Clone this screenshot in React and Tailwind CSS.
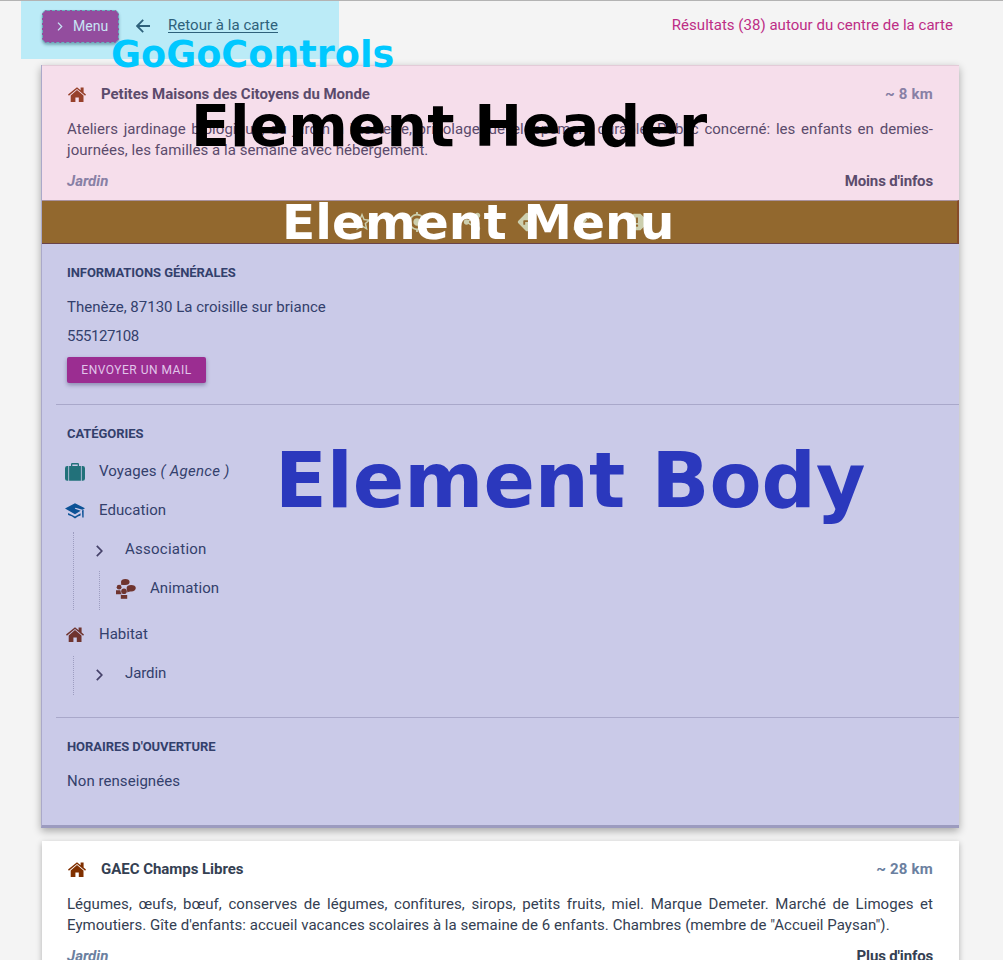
import React from "react";
import { MdStarBorder, MdMyLocation, MdShare, MdDirections, MdEdit, MdReport } from "react-icons/md";

function House({ className }) {
  return (
    <svg viewBox="0 0 18 15" className={`h-[15px] w-[18px] shrink-0 ${className}`} fill="currentColor">
      <path d="M9 0.3 12.6 3.2V0.6H15.6V5.4L18 7.6 17.1 8.7 9 2.1 0.9 8.7 0 7.6Z" />
      <path d="M9 3.1 15.5 8.4V15H10.8V10.4H7.4V15H2.7V8.4Z" />
    </svg>
  );
}

function Suitcase() {
  return (
    <svg viewBox="0 0 20 18" className="h-[18px] w-5" fill="#22717a">
      <path d="M3.3 3V17.8H2.2Q0 17.8 0 15.6V5.2Q0 3 2.2 3ZM16.7 3V17.8H17.8Q20 17.8 20 15.6V5.2Q20 3 17.8 3Z" />
      <path fillRule="evenodd" d="M4.1 17.8V3H6V1.2Q6 0 7.2 0H12.8Q14 0 14 1.2V3H15.9V17.8ZM7.3 3H12.7V1.4H7.3Z" />
    </svg>
  );
}

function Graduation() {
  return (
    <svg viewBox="0 0 20 16" className="h-4 w-5" fill="#0c5296">
      <path d="M10 0.2 20 5.3 17.5 6.7 10.6 4.8 9.8 5.7 15.7 7.7 10 11.2 0 5.6Z" />
      <path d="M3.1 10 10 13.6 15.6 10.3V12.4Q13 12.6 10 15.6 7 12.6 3.1 12.1Z" />
      <path d="M17 7.5 18.6 6.7V14.4H17.3Z" />
    </svg>
  );
}

function Crowd() {
  return (
    <svg viewBox="0 0 20 20" className="h-5 w-5" fill="#6f342f">
      <path d="M9.3 0.1C12 0.1 13.6 1.3 13.6 3S12 6 9.3 6 5.7 5.5 4.6 5.7C5.6 5 5 4 5 3 5 1.3 6.8 0.1 9.3 0.1Z" />
      <path d="M15.2 6C18 6 19.8 7.3 19.8 9.1S18 12.6 15.2 12.6C13.7 12.6 12.7 12.8 11.2 13.5 11.7 12.4 10.6 10.8 10.6 9.1 10.6 7.3 12.4 6 15.2 6Z" />
      <circle cx="3.1" cy="8.2" r="2.4" />
      <circle cx="8" cy="12.3" r="2.8" />
      <path d="M0 11.2H4.4Q4.5 14 6 15.2H0Z" />
      <path d="M4.8 16H11.2V19.8H4.8Z" />
    </svg>
  );
}

function Chevron({ className }) {
  return (
    <svg viewBox="0 0 7 12" className={className} fill="none" stroke="currentColor" strokeWidth="1.7">
      <path d="M0.8 0.8 5.8 6 0.8 11.2" />
    </svg>
  );
}

function ItemHeader({ title, distance, text, action, tone, muted, icon }) {
  return (
    <div className={`h-[134px] pr-[26px] pl-[25px] pt-[17px] text-[15px] ${tone}`}>
      <div className="flex h-[22px] items-center font-bold">
        <House className={`ml-px ${icon}`} />
        <span className="ml-[15px] flex-1 tracking-[-0.03px]">{title}</span>
        <span className={`tracking-[0.2px] ${muted}`}>{distance}</span>
      </div>
      <p className="mt-[14px] text-justify leading-[21px] tracking-[0.045px]">{text}</p>
      <div className="mt-[10px] flex h-[21px] items-center justify-between font-bold">
        <span className={`italic ${muted}`}>Jardin</span>
        <span className="tracking-[-0.15px]">{action}</span>
      </div>
    </div>
  );
}

function Heading({ children }) {
  return <h3 className="text-[13px] leading-5 font-bold tracking-[-0.07px] text-[#33406c]">{children}</h3>;
}

export default function App() {
  return (
    <div className="relative h-[960px] w-[1003px] overflow-hidden border-t border-[#b3b3b3] bg-[#f4f4f4] font-['Roboto',sans-serif] text-[15px]">
      <header className="flex h-[64px] items-start justify-between pr-[50px] pl-[21px]">
        <div className="flex h-[58px] w-[318px] items-start bg-[#bbebf7] pt-[9px] pl-[21px]">
          <button className="flex h-[33px] w-[77px] items-center rounded-[5px] border border-dashed border-[#67b0bd] bg-[#934d9e] pl-[14px] text-[14px] text-[#c8e5f5] shadow-[0_2px_3px_rgba(40,90,110,0.45)]">
            <Chevron className="h-[9px] w-[6px]" />
            <span className="ml-[10px]">Menu</span>
          </button>
          <svg viewBox="0 0 14 14" className="mt-[9px] ml-[17px] h-[14px] w-[14px]" fill="none" stroke="#2e617b" strokeWidth="1.8">
            <path d="M14 7H1.2M7.2 0.9 1.1 7 7.2 13.1" />
          </svg>
          <a className="mt-[4px] ml-[18px] leading-[23px] tracking-[0.04px] text-[#2e617b] underline underline-offset-2">Retour à la carte</a>
        </div>
        <span className="mt-[13px] leading-[23px] tracking-[0.025px] text-[#bd2d86]">Résultats (38) autour du centre de la carte</span>
      </header>

      <main className="ml-[41px] w-[918px]">
        <article className="h-[763px] border-b-3 border-l border-b-[#9c9bbf] border-l-[#aaa9c9] shadow-[0_3px_8px_rgba(0,0,0,0.32)]">
          <div className="border-t border-[#e3cbd8]">
            <ItemHeader
              title="Petites Maisons des Citoyens du Monde"
              distance="~ 8 km"
              text="Ateliers jardinage biologique, du jardin à l'assiette, bricolage, developpement durable. Public concerné: les enfants en demies-journées, les familles à la semaine avec hébergement."
              action="Moins d'infos"
              tone="bg-[#f6deeb] text-[#5b4b6c]"
              muted="text-[#8880a5]"
              icon="text-[#97412b]"
            />
          </div>
          <nav className="flex h-[44px] items-center justify-center gap-[33px] border-t border-r-2 border-b border-t-[#a9929f] border-r-[#874b28] border-b-[#69434a] bg-[#92682e] pr-[1px] text-[22px] text-[#cccfae]">
            <MdStarBorder />
            <MdMyLocation />
            <MdShare />
            <MdDirections />
            <MdEdit />
            <MdReport />
          </nav>
          <div className="h-[581px] bg-[#cacae8] text-[#33406c]">
            <section className="h-[160px] pt-[19px] pl-[25px]">
              <Heading>INFORMATIONS GÉNÉRALES</Heading>
              <p className="mt-[12px] leading-6">Thenèze, 87130 La croisille sur briance</p>
              <p className="mt-[5px] leading-6 tracking-[-0.45px]">555127108</p>
              <button className="mt-[9px] block h-[26px] w-[139px] rounded-[2px] bg-[#9b2d91] text-[12px] tracking-[0.5px] text-[#e0c5ea] shadow-[0_2px_4px_rgba(40,40,90,0.4)]">
                ENVOYER UN MAIL
              </button>
            </section>
            <section className="ml-[14px] h-[313px] border-t border-[#a9a8ca] pt-[19px] pl-[9px]">
              <div className="pl-[2px]"><Heading>CATÉGORIES</Heading></div>
              <div className="mt-[8px] flex h-[39px] items-center">
                <Suitcase />
                <span className="ml-[14px] tracking-[0.1px]">Voyages <i className="tracking-[0.3px]">( Agence )</i></span>
              </div>
              <div className="flex h-[39px] items-center">
                <Graduation />
                <span className="ml-[14px] tracking-[0.08px]">Education</span>
              </div>
              <div className="mt-[2px] ml-[8px] h-[78px] border-l border-dotted border-[#9d9dc0]">
                <div className="flex h-[39px] items-center pb-[4px] pl-[22px]">
                  <Chevron className="mt-[3px] h-3 w-[7px] text-[#46426a]" />
                  <span className="ml-[22px] tracking-[0.25px]">Association</span>
                </div>
                <div className="ml-[25px] flex h-[39px] items-center border-l border-dotted border-[#9d9dc0] pb-[4px] pl-[16px]">
                  <Crowd />
                  <span className="ml-[14px] tracking-[0.08px]">Animation</span>
                </div>
              </div>
              <div className="mt-[5px] flex h-[39px] items-center">
                <House className="ml-px text-[#6f342f]" />
                <span className="ml-[15px]">Habitat</span>
              </div>
              <div className="mt-[2px] ml-[8px] h-[39px] border-l border-dotted border-[#9d9dc0]">
                <div className="flex h-[39px] items-center pb-[4px] pl-[22px]">
                  <Chevron className="mt-[3px] h-3 w-[7px] text-[#46426a]" />
                  <span className="ml-[22px] tracking-[-0.1px]">Jardin</span>
                </div>
              </div>
            </section>
            <section className="ml-[14px] border-t border-[#a9a8ca] pt-[19px] pl-[11px]">
              <Heading>HORAIRES D'OUVERTURE</Heading>
              <p className="mt-[12px] leading-6 tracking-[0.06px]">Non renseignées</p>
            </section>
          </div>
        </article>

        <article className="mt-[13px] ml-px h-[134px] bg-white shadow-[0_2px_6px_rgba(0,0,0,0.28)]">
          <ItemHeader
            title="GAEC Champs Libres"
            distance="~ 28 km"
            text={`Légumes, œufs, bœuf, conserves de légumes, confitures, sirops, petits fruits, miel. Marque Demeter. Marché de Limoges et Eymoutiers. Gîte d'enfants: accueil vacances scolaires à la semaine de 6 enfants. Chambres (membre de "Accueil Paysan").`}
            action="Plus d'infos"
            tone="bg-white text-[#344052]"
            muted="text-[#6b809f]"
            icon="text-[#803000]"
          />
        </article>
      </main>

      <div className="pointer-events-none font-['DejaVu_Sans',sans-serif] leading-none font-bold whitespace-nowrap">
        <span className="absolute top-[36px] left-[111px] text-[36.6px] leading-none text-[#00c8ff]">GoGoControls</span>
        <span className="absolute top-[97px] left-[191px] text-[57.1px] leading-none text-black">Element Header</span>
        <span className="absolute top-[197px] left-[282px] text-[48.7px] leading-none text-white">Element Menu</span>
        <span className="absolute top-[443px] left-[275px] text-[75.9px] leading-none text-[#2b38bd]">Element Body</span>
      </div>
    </div>
  );
}
